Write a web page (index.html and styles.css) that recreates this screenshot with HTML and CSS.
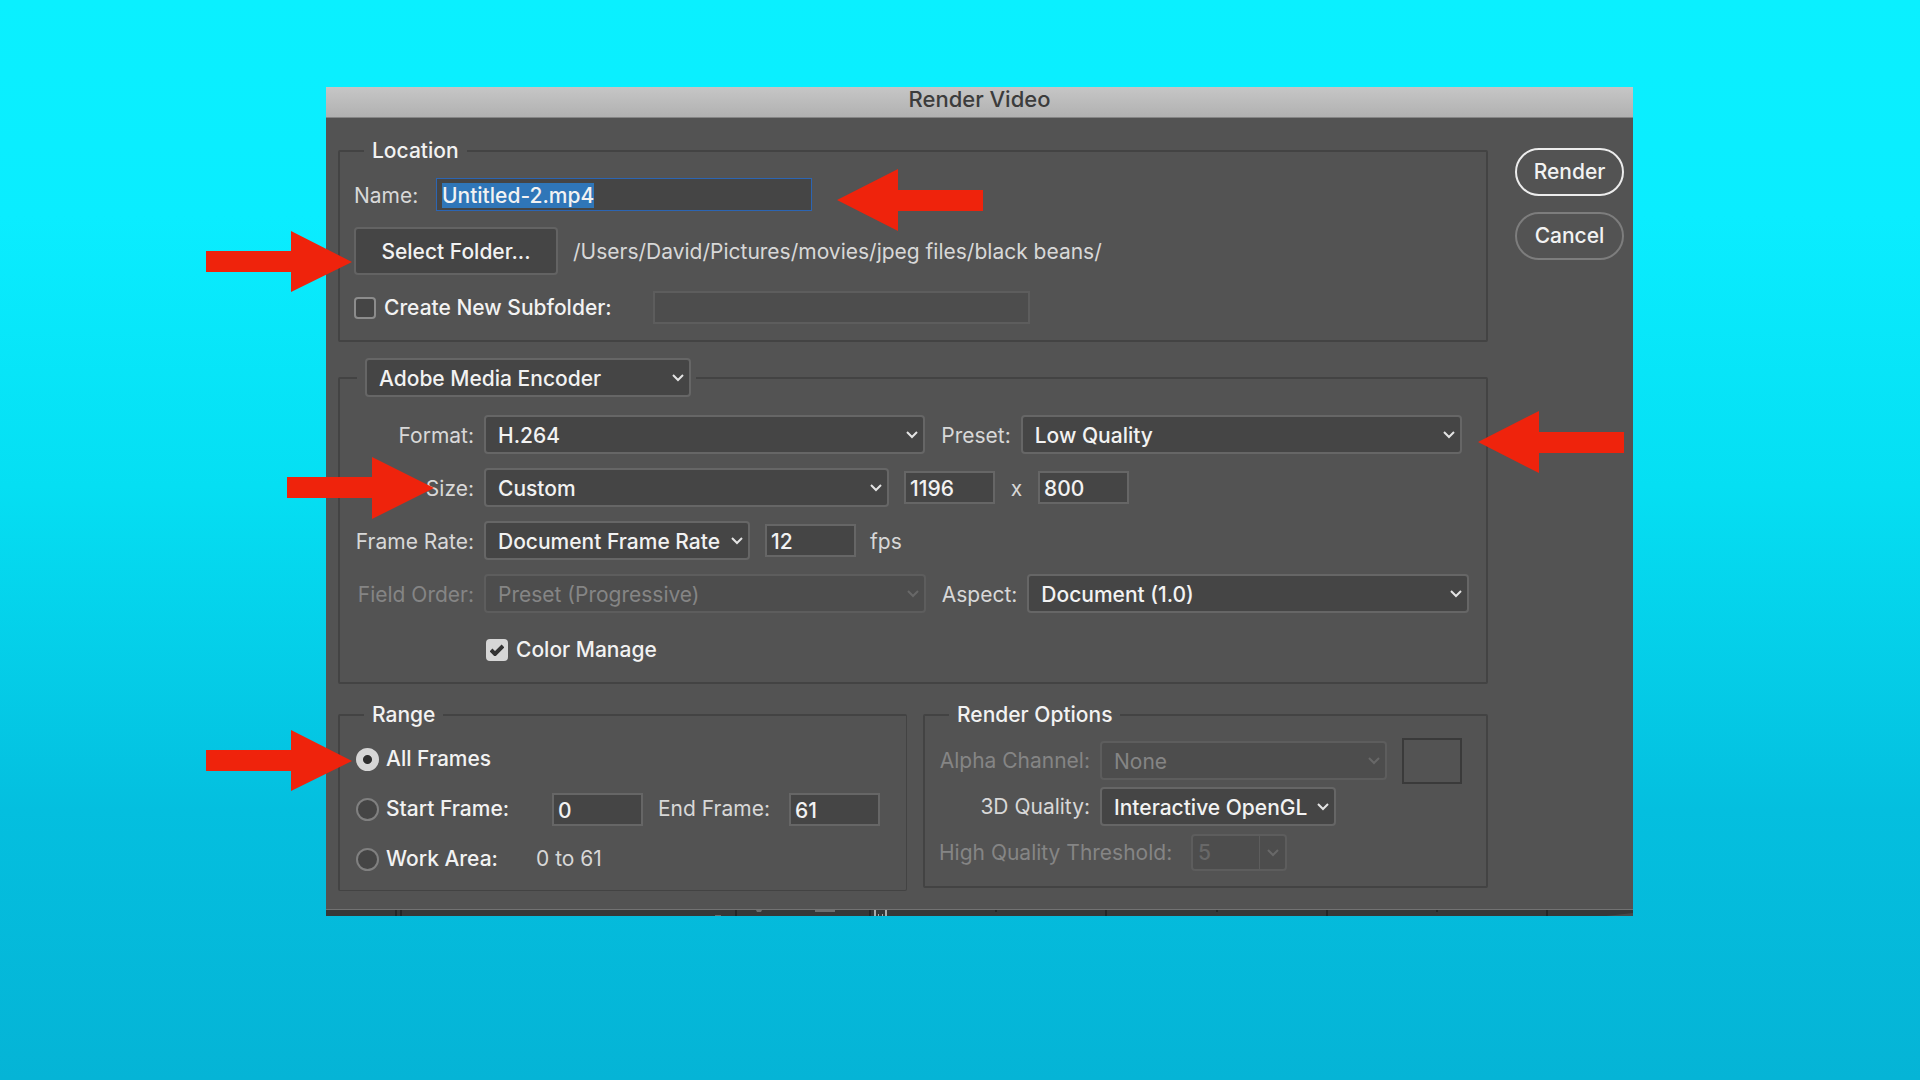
FILE: index.html
```html
<!DOCTYPE html>
<html lang="en">
<head>
<meta charset="utf-8">
<title>Render Video</title>
<link rel="stylesheet" href="styles.css">
</head>
<body>
<main class="stage">
  <form class="dialog" aria-labelledby="dialog-title">
    <h1 class="titlebar" id="dialog-title">Render Video</h1>
    <div class="body">
      <div class="settings">
        <fieldset class="group location">
          <legend class="legend">Location</legend>
          <div class="row">
            <label class="name-label" for="name">Name:</label>
            <input class="field name-field" id="name" type="text" value="Untitled-2.mp4" spellcheck="false" autocomplete="off">
          </div>
          <div class="row folder-row">
            <button class="folder-button" type="button">Select Folder...</button>
            <span class="path">/Users/David/Pictures/movies/jpeg files/black beans/</span>
          </div>
          <div class="row">
            <label class="option subfolder-option"><input class="check" type="checkbox">Create New Subfolder:</label>
            <input class="field subfolder-field" type="text" aria-label="Subfolder name" disabled>
          </div>
        </fieldset>

        <fieldset class="group encoder">
          <legend class="encoder-legend">
            <select class="select encoder-select" aria-label="Encoder"><option>Adobe Media Encoder</option></select>
          </legend>
          <div class="row form-row format-row">
            <label class="row-label" for="format">Format:</label>
            <select class="select grow" id="format"><option>H.264</option></select>
            <label class="side-label" for="preset">Preset:</label>
            <select class="select grow" id="preset"><option>Low Quality</option></select>
          </div>
          <div class="row form-row">
            <label class="row-label" for="size">Size:</label>
            <select class="select size-select" id="size"><option>Custom</option></select>
            <input class="field number after-select" type="text" value="1196" aria-label="Width">
            <span class="times">x</span>
            <input class="field number" type="text" value="800" aria-label="Height">
          </div>
          <div class="row form-row">
            <label class="row-label" for="rate">Frame Rate:</label>
            <select class="select rate-select" id="rate"><option>Document Frame Rate</option></select>
            <input class="field number after-select" type="text" value="12" aria-label="Frames per second">
            <span class="unit">fps</span>
          </div>
          <div class="row form-row aspect-row">
            <label class="row-label dim" for="order">Field Order:</label>
            <select class="select grow" id="order" disabled><option>Preset (Progressive)</option></select>
            <label class="side-label" for="aspect">Aspect:</label>
            <select class="select grow" id="aspect"><option>Document (1.0)</option></select>
          </div>
          <div class="row manage-row">
            <label class="option"><input class="check" type="checkbox" checked>Color Manage</label>
          </div>
        </fieldset>

        <div class="columns">
          <fieldset class="group range">
            <legend class="legend">Range</legend>
            <div class="row range-row">
              <label class="option"><input class="radio" type="radio" name="range" checked>All Frames</label>
            </div>
            <div class="row range-row">
              <label class="option start-option"><input class="radio" type="radio" name="range">Start Frame:</label>
              <input class="field number" type="text" value="0" aria-label="Start frame">
              <label class="end-label" for="end">End Frame:</label>
              <input class="field number" id="end" type="text" value="61">
            </div>
            <div class="row range-row">
              <label class="option area-option"><input class="radio" type="radio" name="range">Work Area:</label>
              <span>0 to 61</span>
            </div>
          </fieldset>

          <fieldset class="group options">
            <legend class="legend">Render Options</legend>
            <div class="row options-row">
              <label class="options-label dim" for="alpha">Alpha Channel:</label>
              <select class="select alpha-select" id="alpha" disabled><option>None</option></select>
              <span class="swatch"></span>
            </div>
            <div class="row options-row">
              <label class="options-label" for="quality">3D Quality:</label>
              <select class="select quality-select" id="quality"><option>Interactive OpenGL</option></select>
            </div>
            <div class="row options-row">
              <label class="threshold-label dim" for="threshold">High Quality Threshold:</label>
              <div class="combo">
                <input class="combo-field" id="threshold" type="text" value="5" disabled>
                <button class="combo-button" type="button" aria-label="Choose threshold" disabled></button>
              </div>
            </div>
          </fieldset>
        </div>
      </div>
      <div class="actions">
        <button class="pill primary" type="button">Render</button>
        <button class="pill" type="button">Cancel</button>
      </div>
    </div>
    <svg class="backdrop" viewBox="0 0 1307 6" preserveAspectRatio="none" aria-hidden="true">
      <rect width="1307" height="6" fill="#363838"/>
      <path fill="#242626" d="M69 0h2v6h-2zM74 0h2v6h-2zM409 0h2v6h-2zM543 0h2v6h-2zM779 0h2v6h-2zM1000 0h2v6h-2zM669 0h2v2h-2zM890 0h2v2h-2zM1110 0h2v2h-2zM1220 0h2v6h-2z"/>
      <path fill="#6c6e6e" d="M430 0h6l-1 2h-4zM489 0h20v2h-20zM389 5h6v1h-6z"/>
      <path fill="#a9abab" d="M548 0h2v6h-2zM559 0h2v6h-2zM552 4h1v2h-1zM556 4h1v2h-1z"/>
      <path fill="#484a4a" d="M1280 6l27-3v3z"/>
    </svg>
  </form>

  <svg class="arrow arrow-name" viewBox="0 0 147 62" aria-hidden="true"><path d="M0 31 61 0V21H146V42H61V62z"/></svg>
  <svg class="arrow arrow-folder" viewBox="0 0 147 62" aria-hidden="true"><path d="M146 31 85 0V20H0V41H85V61z"/></svg>
  <svg class="arrow arrow-preset" viewBox="0 0 147 62" aria-hidden="true"><path d="M0 31 61 0V21H146V42H61V62z"/></svg>
  <svg class="arrow arrow-size" viewBox="0 0 147 62" aria-hidden="true"><path d="M147 31 85 0V20H0V41H85V62z"/></svg>
  <svg class="arrow arrow-range" viewBox="0 0 147 62" aria-hidden="true"><path d="M146 31 85 0V20H0V41H85V61z"/></svg>
</main>
<script src="script.js"></script>
</body>
</html>
```
FILE: script.js
```js
// The file name is ready to be overtyped when the dialog opens.
const nameField = document.getElementById("name");
nameField.focus();
nameField.select();
```
FILE: styles.css
```css
* {
  box-sizing: border-box;
}

body {
  margin: 0;
  font: 400 21px/26px Inter, "Liberation Sans", sans-serif;
  color: #d8d8d8;
}

input,
select,
button {
  margin: 0;
  font: inherit;
  font-weight: 500;
  color: #f2f2f2;
  outline: none;
}

.stage {
  position: relative;
  min-height: 100vh;
  padding: 87px 287px 40px 326px;
  background: linear-gradient(#0af0ff 0%, #0aedff 20%, #05dff3 45%, #04bfdf 75%, #05b4d6 100%);
}

.dialog {
  background: #535353;
}

.titlebar {
  height: 31px;
  margin: 0;
  border-bottom: 1px solid #858585;
  background: linear-gradient(#c6c6c6, #b1b1b1);
  font-size: 22px;
  font-weight: 500;
  line-height: 25px;
  color: #3c3c3c;
  text-align: center;
}

.body {
  display: flex;
  gap: 27px;
  padding: 20px 9px 18px 12px;
  border-bottom: 1px solid #727272;
}

.settings {
  flex: 1;
}

.actions {
  display: flex;
  flex-direction: column;
  gap: 16px;
  padding-top: 10px;
}

.pill {
  width: 109px;
  height: 48px;
  padding: 0;
  border: 2px solid #7d7d7d;
  border-radius: 24px;
  background: none;
}

.primary {
  border-color: #ececec;
}

/* Groups */

.group {
  min-width: 0;
  margin: 0;
  border: 2px solid #434343;
  border-radius: 2px;
}

.legend {
  margin-left: 10px;
  padding: 0 8px;
  font-weight: 500;
  color: #f2f2f2;
}

.location {
  padding: 14px 14px 16px;
}

.encoder {
  margin-top: 16px;
  padding: 18px 14px 10px;
}

.encoder-legend {
  display: flex;
  margin-left: 3px;
  padding: 0 5px 0 8px;
}

.columns {
  display: grid;
  grid-template-columns: 1fr 565px;
  align-items: start;
  gap: 16px;
  margin-top: 18px;
}

.range {
  padding: 14px 14px 14px 16px;
  border-width: 2px 1px 1px 2px;
}

.range .legend {
  margin-left: 8px;
}

.options {
  padding: 13px 14px 14px;
}

/* Rows */

.row {
  display: flex;
  align-items: center;
  white-space: nowrap;
}

.form-row {
  margin-bottom: 14px;
}

.format-row {
  padding-right: 10px;
}

.aspect-row {
  padding-right: 3px;
}

.folder-row {
  gap: 15px;
  margin: 16px 0;
}

.manage-row {
  height: 45px;
  padding-left: 132px;
}

.range-row {
  height: 34px;
}

.range-row + .range-row {
  margin-top: 16px;
}

.options-row {
  height: 39px;
}

.options-row + .options-row {
  margin-top: 7px;
}

.name-label {
  width: 82px;
  padding-top: 2px;
}

.path {
  padding-top: 2px;
}

.row-label {
  width: 120px;
  margin-right: 10px;
  padding-top: 2px;
  text-align: right;
}

.side-label {
  margin: 0 10px 0 16px;
  padding-top: 2px;
}

.options-label {
  width: 151px;
  margin-right: 10px;
  text-align: right;
}

.threshold-label {
  width: 252px;
}

.end-label {
  width: 146px;
  padding-left: 15px;
}

.times {
  width: 43px;
  padding-top: 2px;
  text-align: center;
}

.unit {
  margin-left: 14px;
  padding-top: 2px;
}

.dim {
  color: #858585;
}

/* Controls */

.field {
  height: 33px;
  padding: 2px 4px 0;
  border: 2px solid #666;
  background: #454545;
}

.field:disabled {
  border-color: #5d5d5d;
  background: #4d4d4d;
}

.name-field {
  width: 376px;
  padding: 2px 5px 0;
  border: 1px solid #2c65b3;
}

.name-field::selection {
  background: #2f76b8;
  color: #f2f2f2;
}

.subfolder-field {
  width: 377px;
}

.number {
  width: 91px;
}

.after-select {
  margin-left: 15px;
}

.folder-button {
  width: 204px;
  height: 48px;
  padding: 2px 0 0;
  border: 2px solid #636363;
  border-radius: 4px;
  background: #454545;
}

.select {
  height: 39px;
  padding: 2px 24px 0 12px;
  border: 2px solid #666;
  border-radius: 4px;
  appearance: none;
  background: #454545 url("data:image/svg+xml,%3Csvg xmlns='http://www.w3.org/2000/svg' width='12' height='8'%3E%3Cpath d='M1 1l5 5 5-5' fill='none' stroke='%23e4e4e4' stroke-width='2'/%3E%3C/svg%3E") no-repeat right 5px center;
}

.select:disabled {
  border-color: #5d5d5d;
  background: #4d4d4d url("data:image/svg+xml,%3Csvg xmlns='http://www.w3.org/2000/svg' width='12' height='8'%3E%3Cpath d='M1 1l5 5 5-5' fill='none' stroke='%23686868' stroke-width='2'/%3E%3C/svg%3E") no-repeat right 5px center;
  font-weight: 400;
  color: #858585;
  opacity: 1;
}

.grow {
  flex: 1 1 0;
  min-width: 0;
}

.encoder-select {
  width: 326px;
}

.size-select {
  width: 405px;
}

.rate-select {
  width: 266px;
}

.alpha-select {
  width: 287px;
}

.quality-select {
  width: 236px;
}

.swatch {
  width: 60px;
  height: 46px;
  margin-left: 15px;
  border: 2px solid #3a3a3a;
}

.combo {
  display: flex;
  height: 37px;
  width: 96px;
  border: 2px solid #5d5d5d;
  border-radius: 4px;
  background: #4d4d4d;
}

.combo-field {
  flex: 1;
  min-width: 0;
  padding: 0 5px;
  border: 0;
  background: none;
  color: #686868;
}

.combo-button {
  width: 26px;
  padding: 0;
  border: 0;
  border-left: 1px solid #5d5d5d;
  background: url("data:image/svg+xml,%3Csvg xmlns='http://www.w3.org/2000/svg' width='12' height='8'%3E%3Cpath d='M1 1l5 5 5-5' fill='none' stroke='%23686868' stroke-width='2'/%3E%3C/svg%3E") no-repeat center;
}

.option {
  display: flex;
  align-items: center;
  font-weight: 500;
  color: #f2f2f2;
}

.subfolder-option {
  width: 299px;
}

.start-option {
  width: 196px;
}

.area-option {
  width: 180px;
}

.check {
  width: 22px;
  height: 22px;
  margin-right: 8px;
  border: 2px solid #8c8c8c;
  border-radius: 4px;
  appearance: none;
  background: #454545;
}

.check:checked {
  border-color: #d6d6d6;
  background: #d6d6d6 url("data:image/svg+xml,%3Csvg xmlns='http://www.w3.org/2000/svg' width='14' height='12'%3E%3Cpath d='M1 6l4 4 8-8' fill='none' stroke='%23333' stroke-width='4'/%3E%3C/svg%3E") no-repeat center;
}

.radio {
  width: 23px;
  height: 23px;
  margin-right: 7px;
  border: 2px solid #808080;
  border-radius: 50%;
  appearance: none;
  background: #454545;
}

.radio:checked {
  border-color: #d6d6d6;
  background: radial-gradient(circle, #2e2e2e 4px, #d6d6d6 5px);
}

.backdrop {
  display: block;
  width: 100%;
  height: 6px;
}

/* Pointers laid over the dialog */

.arrow {
  position: absolute;
  width: 147px;
  height: 62px;
  fill: #ef230c;
}

.arrow-name {
  top: 169px;
  left: 837px;
}

.arrow-folder {
  top: 231px;
  left: 206px;
}

.arrow-preset {
  top: 411px;
  left: 1478px;
}

.arrow-size {
  top: 457px;
  left: 287px;
}

.arrow-range {
  top: 730px;
  left: 206px;
}
```
